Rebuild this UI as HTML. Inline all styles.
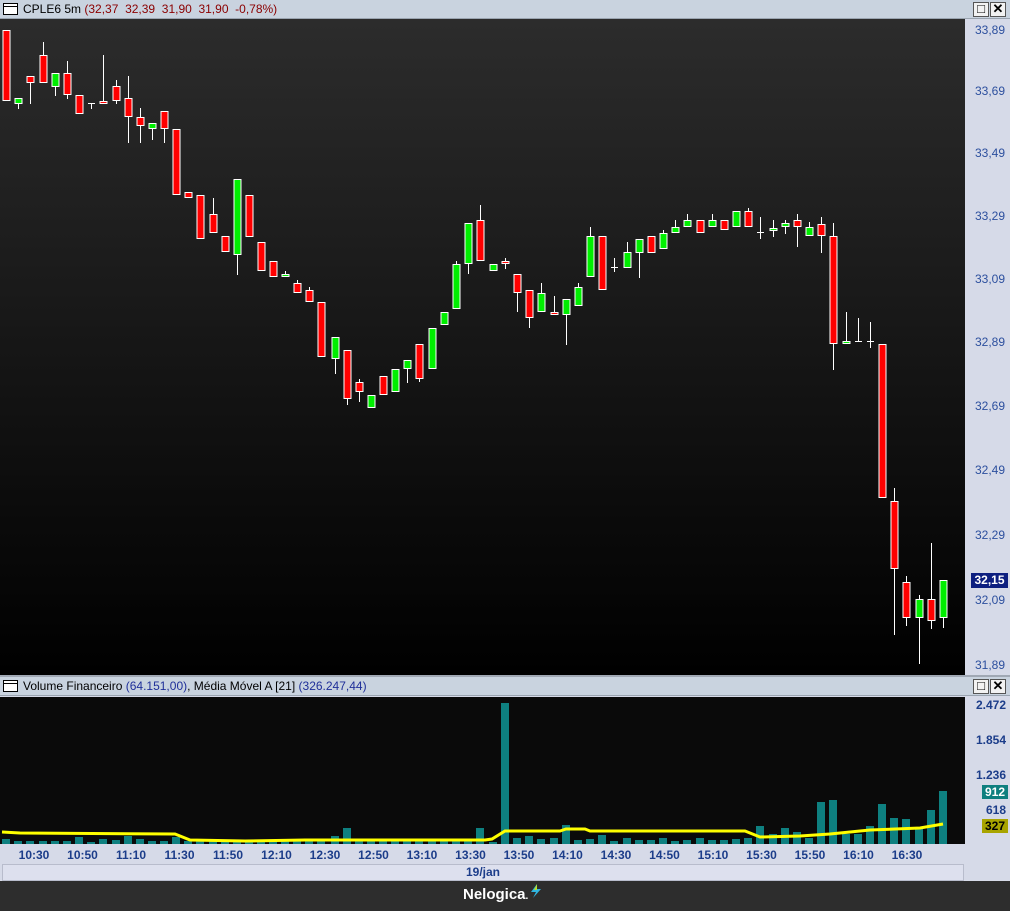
<!DOCTYPE html>
<html><head><meta charset="utf-8"><style>
*{margin:0;padding:0;box-sizing:border-box}
body{width:1010px;height:911px;overflow:hidden;background:#d6dae8;font-family:"Liberation Sans",sans-serif;position:relative}
.bar{position:absolute;left:0;width:1010px;height:19px;background:#c9d3df;border-bottom:1px solid #9aa4b0;font-size:12px;line-height:18px}
.bar .ic{position:absolute;left:3px;top:3px;width:15px;height:12px;border:1px solid #000;background:#fff}
.bar .ic:after{content:"";position:absolute;left:0;right:0;top:2px;border-top:1px solid #000}
.bar .t{position:absolute;left:23px;top:0;white-space:pre}
.btn{position:absolute;top:2px;width:16px;height:15px;border:1px solid #555;background:#f2f2f2;font-size:13px;line-height:12px;text-align:center;font-weight:bold}
.ax{position:absolute;right:5px;font-size:12px;color:#2c4f9e}
.vx{position:absolute;right:4px;font-size:12px;color:#1c3d8a;font-weight:bold}
.tl{position:absolute;top:848px;font-size:12px;font-weight:bold;color:#1c3d8a;transform:translateX(-50%)}
</style></head><body>
<div class="bar" style="top:0"><div class="ic"></div><div class="t"><span style="color:#000">CPLE6 5m</span> <span style="color:#8b0000">(32,37  32,39  31,90  31,90  -0,78%)</span></div>
<div class="btn" style="left:973px">&#9633;</div><div class="btn" style="left:990px">✕</div></div>
<svg id="main" width="965" height="656" style="position:absolute;left:0;top:19px">
<defs><linearGradient id="g" x1="0" y1="0" x2="0" y2="1"><stop offset="0" stop-color="#2c2c2c"/><stop offset="1" stop-color="#000"/></linearGradient></defs>
<rect width="965" height="656" fill="url(#g)"/></svg>
<div class="ax" style="top:23px">33,89</div><div class="ax" style="top:84px">33,69</div><div class="ax" style="top:146px">33,49</div><div class="ax" style="top:209px">33,29</div><div class="ax" style="top:272px">33,09</div><div class="ax" style="top:335px">32,89</div><div class="ax" style="top:399px">32,69</div><div class="ax" style="top:463px">32,49</div><div class="ax" style="top:528px">32,29</div><div class="ax" style="top:593px">32,09</div><div class="ax" style="top:658px">31,89</div>
<div style="position:absolute;left:971px;top:573px;width:37px;height:15px;background:#0d1f80;color:#fff;font-weight:bold;font-size:12px;line-height:15px;text-align:center">32,15</div>
<div style="position:absolute;left:0;top:675px;width:1010px;height:2px;background:#a0a8b4"></div>
<div class="bar" style="top:677px"><div class="ic"></div><div class="t"><span style="color:#000">Volume Financeiro</span> <span style="color:#1f2f99">(64.151,00)</span><span style="color:#000">, Média Móvel A [21]</span> <span style="color:#1f2f99">(326.247,44)</span></div>
<div class="btn" style="left:973px">&#9633;</div><div class="btn" style="left:990px">✕</div></div>
<svg id="vol" width="965" height="147" style="position:absolute;left:0;top:697px"><rect width="965" height="147" fill="#0a0a0a"/></svg>
<div class="vx" style="top:698px">2.472</div><div class="vx" style="top:733px">1.854</div><div class="vx" style="top:768px">1.236</div><div class="vx" style="top:803px">618</div>
<div style="position:absolute;left:982px;top:785px;width:26px;height:14px;background:#0e7f7f;color:#fff;font-weight:bold;font-size:12px;line-height:14px;text-align:center">912</div>
<div style="position:absolute;left:982px;top:819px;width:26px;height:14px;background:#a8a400;color:#000;font-weight:bold;font-size:12px;line-height:14px;text-align:center">327</div>
<div id="tls"></div>
<div style="position:absolute;left:2px;top:864px;width:962px;height:17px;background:#dde0ee;border:1px solid #b8bccc;font-size:12px;font-weight:bold;color:#1c3d8a;text-align:center;line-height:15px">19/jan</div>
<div style="position:absolute;left:0;top:881px;width:1010px;height:30px;background:#2d2d2d"></div>
<div style="position:absolute;left:463px;top:886px;color:#fff;font-weight:bold;font-size:15px">Nelogica<span style="font-size:10px">.</span></div>
<svg width="16" height="16" style="position:absolute;left:528px;top:883px"><path d="M9 1 L3 9 H8 L5 15 L13 6 H8 Z" fill="#2fb5e0"/><path d="M9 1 L6 7 H9 Z" fill="#b8e02a"/></svg>
<script>
var C=[[6,30,30,100,100,'r'],[18,98,98,103,108,'g'],[30,76,76,82,103,'r'],[43,42,55,82,82,'r'],[55,73,73,86,95,'g'],[67,61,73,94,98,'r'],[79,95,95,113,113,'r'],[91,103,103,103,108,'w'],[103,55,101,103,103,'r'],[116,80,86,100,103,'r'],[128,76,98,116,142,'r'],[140,108,117,125,142,'r'],[152,123,123,128,139,'g'],[164,111,111,128,142,'r'],[176,129,129,194,194,'r'],[188,192,192,197,197,'r'],[200,195,195,238,238,'r'],[213,198,214,232,232,'r'],[225,236,236,251,251,'r'],[237,179,179,254,274,'g'],[249,195,195,236,236,'r'],[261,242,242,270,270,'r'],[273,261,261,276,276,'r'],[285,271,274,276,276,'g'],[297,280,283,292,292,'r'],[309,287,290,301,301,'r'],[321,302,302,356,356,'r'],[335,337,337,358,373,'g'],[347,350,350,398,404,'r'],[359,379,382,391,401,'r'],[371,395,395,407,407,'g'],[383,376,376,394,394,'r'],[395,369,369,391,391,'g'],[407,360,360,368,382,'g'],[419,344,344,378,381,'r'],[432,328,328,368,368,'g'],[444,312,312,324,324,'g'],[456,261,264,308,308,'g'],[468,223,223,263,273,'g'],[480,205,220,260,260,'r'],[493,264,264,270,270,'g'],[505,258,261,263,268,'r'],[517,274,274,292,311,'r'],[529,290,290,317,327,'r'],[541,283,293,311,311,'g'],[554,296,312,314,314,'r'],[566,299,299,314,344,'g'],[578,283,287,305,305,'g'],[590,227,236,276,276,'g'],[602,236,236,289,289,'r'],[614,258,267,267,271,'w'],[627,242,252,267,267,'g'],[639,239,239,252,277,'g'],[651,236,236,252,252,'r'],[663,230,233,248,248,'g'],[675,220,227,232,232,'g'],[687,214,220,226,226,'g'],[700,220,220,232,232,'r'],[712,214,220,226,226,'g'],[724,220,220,229,229,'r'],[736,211,211,226,226,'g'],[748,208,211,226,226,'r'],[760,217,232,232,238,'w'],[773,220,228,230,236,'g'],[785,220,223,226,233,'g'],[797,214,220,226,246,'r'],[809,222,227,235,235,'g'],[821,217,224,235,252,'r'],[833,223,236,343,369,'r'],[846,312,341,343,343,'g'],[858,318,341,341,341,'w'],[870,322,341,341,347,'w'],[882,344,344,497,497,'r'],[894,488,501,568,634,'r'],[906,576,582,617,625,'r'],[919,595,599,617,663,'g'],[931,543,599,620,628,'r'],[943,580,580,617,627,'g']];
var s='',o=19;
C.forEach(function(c){var x=c[0],h=c[1]-o,t=c[2]-o,b=c[3]-o,l=c[4]-o;
s+='<line x1="'+(x+.5)+'" x2="'+(x+.5)+'" y1="'+h+'" y2="'+(l+1)+'" stroke="#fff"/>';
if(c[5]=='w'){s+='<line x1="'+(x-3)+'" x2="'+(x+4)+'" y1="'+(t+.5)+'" y2="'+(t+.5)+'" stroke="#fff"/>';}
else s+='<rect x="'+(x-3)+'" y="'+(t+.5)+'" width="7" height="'+Math.max(b-t,2)+'" fill="'+(c[5]=='r'?'#ff0000':'#00ee00')+'" stroke="#fff"/>';});
document.getElementById('main').insertAdjacentHTML('beforeend',s);
var V={6:839,18:841,30:841,43:841,55:841,67:841,79:837,91:842,103:839,116:840,128:836,140:839,152:841,164:841,176:837,308:833,320:841,335:836,347:828,359:840,371:841,383:841,428:831,480:828,493:842,505:703,517:838,529:836,541:839,554:838,566:825,578:840,590:839,602:835,614:841,627:838,639:840,651:840,663:838,675:841,687:840,700:838,712:840,724:840,736:839,748:838,760:826,773:834,785:828,797:832,809:838,821:802,833:800,846:834,858:834,870:826,882:804,894:818,906:819,919:828,931:810,943:791};
var vs='',vo=697;
C.forEach(function(c){var x=c[0],t=V[x]||841;vs+='<rect x="'+(x-4)+'" y="'+(t-vo)+'" width="8" height="'+(844-t)+'" fill="#0e8080"/>';});
var P=[[2,832],[20,833],[175,834],[190,840],[245,841],[305,840],[485,840],[492,839],[505,831],[560,831],[566,829],[585,829],[590,831],[745,831],[760,837],[800,836],[830,834],[870,830],[920,828],[943,824]];
vs+='<polyline fill="none" stroke="#ffff00" stroke-width="3" points="'+P.map(function(p){return p[0]+','+(p[1]-vo)}).join(' ')+'"/>';
document.getElementById('vol').insertAdjacentHTML('beforeend',vs);
var T=['10:30','10:50','11:10','11:30','11:50','12:10','12:30','12:50','13:10','13:30','13:50','14:10','14:30','14:50','15:10','15:30','15:50','16:10','16:30'],th='';
T.forEach(function(t,i){th+='<div class="tl" style="left:'+(34+i*48.5)+'px">'+t+'</div>';});
document.getElementById('tls').innerHTML=th;
</script>
</body></html>
